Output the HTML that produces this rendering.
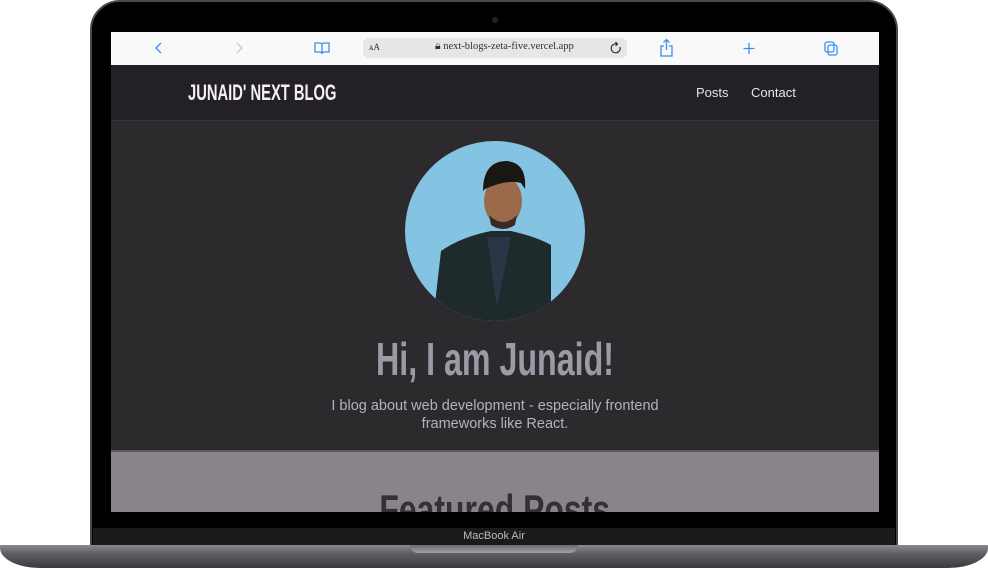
<!DOCTYPE html>
<html><head><meta charset="utf-8"><style>
*{margin:0;padding:0;box-sizing:border-box}
body{width:988px;height:568px;background:#fff;position:relative;overflow:hidden;font-family:"Liberation Sans",sans-serif}
.abs{position:absolute}
#frame{left:90px;top:0;width:808px;height:548px;background:#000;border-radius:30px 30px 0 0;border:2px solid #4a4a4e}
#screen{left:111px;top:32px;width:768px;height:480px;overflow:hidden;background:#2d2a2e}
#bar{left:0;top:0;width:768px;height:33px;background:#f9f9f9}
#url{left:252px;top:6px;width:264px;height:20px;background:#e6e6e7;border-radius:6px;font-size:10.5px;font-family:"Liberation Serif",serif;color:#333}
#nav{left:0;top:33px;width:768px;height:56px;background:#232125;border-bottom:1px solid #3a373c}
.narrow{font-weight:bold;white-space:nowrap}
.sq{display:inline-block;transform:scaleX(.70)}
#feat{left:0;top:418px;width:768px;height:62px;background:#888489;border-top:2px solid #5a575c}
.ic{stroke:#3b8ef0;fill:none;stroke-width:1.3}
</style></head><body>
<div id="frame" class="abs"></div>
<div class="abs" style="left:492px;top:17px;width:6px;height:6px;border-radius:50%;background:#222"></div>
<div id="screen" class="abs">
  <div id="bar" class="abs">
    <svg class="abs" style="left:0;top:0" width="768" height="33">
      <path class="ic" d="M50 11l-5 5 5 5"/>
      <path d="M126 11l5 5-5 5" stroke="#c8c8c8" fill="none" stroke-width="1.3"/>
      <path class="ic" d="M204 11h5a2 2 0 0 1 2 2v9a2 2 0 0 0-2-2h-5zM218 11h-5a2 2 0 0 0-2 2v9a2 2 0 0 1 2-2h5z"/>
      <path class="ic" d="M553 14h-3v10h11v-10h-3M555.5 18v-10M552.5 10.5l3-3 3 3"/>
      <path class="ic" d="M638 11v11M632.5 16.5h11"/>
      <rect class="ic" x="714" y="10" width="9" height="10" rx="2"/><rect class="ic" x="717" y="13" width="9" height="10" rx="2" fill="#f9f9f9"/>
    </svg>
    <div id="url" class="abs"><span class="abs" style="left:6px;top:4px;font-size:9px">ᴀA</span><span class="abs" style="left:72px;top:3px;width:180px">🔒︎ next-blogs-zeta-five.vercel.app</span>
      <svg class="abs" style="left:246px;top:3px" width="14" height="14"><path d="M11 6a4.5 4.5 0 1 1-3-3M6.5 1l2 2-2 2" stroke="#333" fill="none" stroke-width="1.2"/></svg>
    </div>
  </div>
  <div id="nav" class="abs">
    <div class="abs narrow" style="left:77px;top:15px;font-size:22px;color:#f3eef8;transform-origin:0 0;transform:scaleX(.67)">JUNAID' NEXT BLOG</div>
    <div class="abs" style="left:585px;top:20px;font-size:13px;color:#e8e4ee">Posts</div>
    <div class="abs" style="left:640px;top:20px;font-size:13px;color:#e8e4ee">Contact</div>
  </div>
  <svg class="abs" style="left:294px;top:109px" width="180" height="180">
    <defs><clipPath id="c"><circle cx="90" cy="90" r="90"/></clipPath></defs>
    <g clip-path="url(#c)">
      <rect width="180" height="180" fill="#85c3e2"/>
      <path d="M28 180l8-70q20-14 50-20l20 0q26 6 40 14l0 76z" fill="#1f2a2c"/>
      <path d="M82 96l10 70 14-70z" fill="#2c3548"/>
      <ellipse cx="98" cy="60" rx="19" ry="25" fill="#9a6a4a"/>
      <path d="M78 50q0-30 24-30q20 2 18 28l-4-6q-14-4-36 6z" fill="#1a1614"/>
      <path d="M84 74q14 14 28 0l-2 10q-12 8-24 0z" fill="#3a2c24"/>
    </g>
  </svg>
  <div class="abs narrow" style="left:0;top:300px;width:768px;text-align:center;font-size:46px;color:#9d9aa6"><span class="sq">Hi, I am Junaid!</span></div>
  <div class="abs" style="left:214px;top:365px;width:340px;text-align:center;font-size:14.5px;line-height:18px;color:#b5b1bb">I blog about web development - especially frontend frameworks like React.</div>
  <div id="feat" class="abs">
    <div class="abs narrow" style="left:0;top:34px;width:768px;text-align:center;font-size:42px;color:#333035"><span class="sq" style="transform:scaleX(.76)">Featured Posts</span></div>
  </div>
</div>
<div class="abs" style="left:93px;top:528px;width:802px;height:18px;background:#1b1b1c;text-align:center;font-size:11px;color:#bbb;line-height:17px">MacBook Air</div>
<div class="abs" style="left:0;top:545px;width:988px;height:23px;background:linear-gradient(#8a8b90,#5c5d62 40%,#3a3b40);border-radius:0 0 40px 40px/0 0 20px 20px"></div>
<div class="abs" style="left:410px;top:545px;width:168px;height:8px;background:linear-gradient(#6a6b70,#a0a1a6);border-radius:0 0 8px 8px"></div>
</body></html>
